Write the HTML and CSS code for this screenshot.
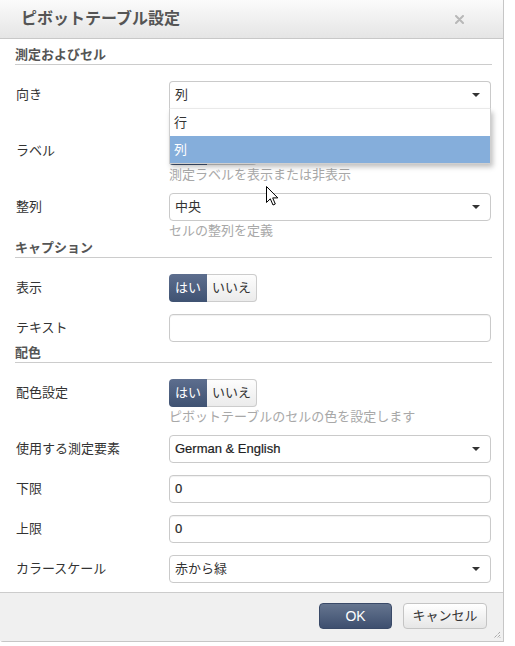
FILE: index.html
```html
<!DOCTYPE html>
<html lang="ja">
<head>
<meta charset="utf-8">
<title>ピボットテーブル設定</title>
<link rel="stylesheet" href="styles.css">
</head>
<body>
<div class="page">
  <div class="dialog">
    <div class="dlg-header">
      <h1 class="dlg-title">ピボットテーブル設定</h1>
      <svg class="close" width="9" height="9" viewBox="0 0 9 9"><path d="M1 1L8 8M8 1L1 8" stroke="#b8b8b8" stroke-width="2" stroke-linecap="round"/></svg>
    </div>
    <div class="dlg-body">
      <section class="group">
        <h2 class="group-title">測定およびセル</h2>
        <div class="row">
          <div class="lbl">向き</div>
          <div class="ctl">
            <div class="field select open">列<i class="caret"></i>
              <ul class="menu">
                <li>行</li>
                <li class="active">列</li>
              </ul>
            </div>
            <div class="help"></div>
          </div>
        </div>
        <div class="row">
          <div class="lbl">ラベル</div>
          <div class="ctl">
            <div class="toggle covered"><span class="tg-on"><span class="txt">はい</span></span><span class="tg-off"><span class="txt">いいえ</span></span></div>
            <div class="help">測定ラベルを表示または非表示</div>
          </div>
        </div>
        <div class="row">
          <div class="lbl">整列</div>
          <div class="ctl">
            <div class="field select">中央<i class="caret"></i></div>
            <div class="help">セルの整列を定義</div>
          </div>
        </div>
      </section>
      <section class="group">
        <h2 class="group-title">キャプション</h2>
        <div class="row">
          <div class="lbl">表示</div>
          <div class="ctl">
            <div class="toggle"><span class="tg-on">はい</span><span class="tg-off">いいえ</span></div>
          </div>
        </div>
        <div class="row">
          <div class="lbl">テキスト</div>
          <div class="ctl">
            <div class="field input"></div>
          </div>
        </div>
      </section>
      <section class="group">
        <h2 class="group-title">配色</h2>
        <div class="row">
          <div class="lbl">配色設定</div>
          <div class="ctl">
            <div class="toggle"><span class="tg-on">はい</span><span class="tg-off">いいえ</span></div>
            <div class="help">ピボットテーブルのセルの色を設定します</div>
          </div>
        </div>
        <div class="row">
          <div class="lbl">使用する測定要素</div>
          <div class="ctl">
            <div class="field select latin">German &amp; English<i class="caret"></i></div>
          </div>
        </div>
        <div class="row">
          <div class="lbl">下限</div>
          <div class="ctl">
            <div class="field input latin">0</div>
          </div>
        </div>
        <div class="row">
          <div class="lbl">上限</div>
          <div class="ctl">
            <div class="field input latin">0</div>
          </div>
        </div>
        <div class="row">
          <div class="lbl">カラースケール</div>
          <div class="ctl">
            <div class="field select">赤から緑<i class="caret"></i></div>
          </div>
        </div>
      </section>
    </div>
    <div class="dlg-footer">
      <button class="btn btn-primary">OK</button>
      <button class="btn btn-default">キャンセル</button>
    </div>
    <svg class="grip" width="8" height="8" viewBox="0 0 8 8"><path d="M7 1L1 7M7 4L4 7M7 6.5L6.5 7" stroke="#888" stroke-width="1" stroke-dasharray="1 1"/></svg>
  </div>
  <svg class="cursor" width="13" height="20" viewBox="0 0 13 20"><path d="M0.5 0.5L0.5 16.5L4.3 12.8L7 19L9.3 18L6.7 11.9L11.8 11.9Z" fill="#fff" stroke="#000" stroke-width="1" stroke-linejoin="round"/></svg>
</div>
</body>
</html>
```

FILE: styles.css
```css
body {
  margin: 0;
  background: #fff;
  font-family: "Liberation Sans", "Noto Sans CJK JP", sans-serif;
  font-size: 13px;
  color: #333;
}

.page {
  position: relative;
  width: 515px;
  height: 646px;
  overflow: hidden;
}

.dialog {
  position: relative;
  width: 503px;
  background: #fff;
  border-right: 1px solid #c6c6c6;
  border-bottom: 1px solid #c6c6c6;
  border-bottom-left-radius: 3px;
}

.dlg-header {
  height: 38px;
  border-bottom: 1px solid #c8c8c8;
  background: linear-gradient(#fbfbfb, #e5e5e5);
  display: flex;
  align-items: center;
  justify-content: space-between;
  padding: 0 39px 0 21px;
}

.dlg-title {
  margin: 0;
  font-size: 16px;
  font-weight: bold;
  color: #555;
  line-height: 20px;
}

.close {
  display: block;
}

.dlg-body {
  padding: 5px 11px 9px 15px;
}

.group-title {
  margin: 2px 0 16px;
  font-size: 13px;
  font-weight: bold;
  color: #555;
  line-height: 18px;
  border-bottom: 1px solid #cccccc;
}

.row {
  display: grid;
  grid-template-columns: 153px 1fr;
  padding: 0 1px;
  margin-bottom: 12px;
}

.row:last-child {
  margin-bottom: 0;
}

.lbl {
  line-height: 28px;
  color: #333;
}

.ctl {
  min-width: 0;
}

.field {
  position: relative;
  box-sizing: border-box;
  height: 28px;
  border: 1px solid #cacaca;
  border-radius: 4px;
  background: #fff;
  padding: 0 6px 0 5px;
  line-height: 26px;
  color: #333;
}

.latin {
  color: #222;
  -webkit-text-stroke: 0.2px #222;
}

.input {
  box-shadow: inset 0 1px 1px rgba(0, 0, 0, 0.06);
}

.caret {
  position: absolute;
  right: 10px;
  top: 11px;
  width: 0;
  height: 0;
  border-left: 4px solid transparent;
  border-right: 4px solid transparent;
  border-top: 4px solid #333;
}

.select.open {
  border-bottom-color: #eeeeee;
  border-bottom-left-radius: 0;
  border-bottom-right-radius: 0;
}

.menu {
  position: absolute;
  top: 27px;
  left: -1px;
  right: -1px;
  margin: 0;
  padding: 0;
  list-style: none;
  background: #fff;
  border: 1px solid #cfcfcf;
  border-top: none;
  box-shadow: 2px 3px 5px rgba(0, 0, 0, 0.25);
  z-index: 5;
}

.menu li {
  height: 27px;
  line-height: 27px;
  padding-left: 4px;
  color: #333;
}

.menu li.active {
  background: #85aedb;
  color: #fff;
}

.help {
  margin-top: 4px;
  height: 12px;
  line-height: 12px;
  color: #a8a8a8;
  white-space: nowrap;
}

.toggle {
  display: flex;
  width: 88px;
  height: 28px;
}

.toggle.covered .txt {
  visibility: hidden;
}

.tg-on {
  width: 38px;
  border-radius: 4px 0 0 4px;
  background: linear-gradient(#5d6e8e, #3f5272);
  color: #fff;
  text-align: center;
  line-height: 28px;
}

.tg-off {
  box-sizing: border-box;
  width: 50px;
  border: 1px solid #cccccc;
  border-left: none;
  border-radius: 0 4px 4px 0;
  background: linear-gradient(#fdfdfd, #ebebeb);
  color: #333;
  text-align: center;
  line-height: 26px;
}

.dlg-footer {
  border-top: 1px solid #cccccc;
  background: #f0f0f0;
  padding: 10px 16px 12px;
  display: flex;
  justify-content: flex-end;
  gap: 11px;
}

.btn {
  box-sizing: border-box;
  height: 26px;
  border-radius: 4px;
  font-family: "Liberation Sans", "Noto Sans CJK JP", sans-serif;
  font-size: 13px;
  line-height: 24px;
  padding: 0;
  margin: 0;
}

.btn-primary {
  width: 73px;
  background: linear-gradient(#65758f, #3e4f6f);
  border: 1px solid #3a4a68;
  color: #fff;
  font-size: 14px;
}

.btn-default {
  width: 84px;
  background: linear-gradient(#ffffff, #e6e6e6);
  border: 1px solid #c4c4c4;
  color: #333;
}

.grip {
  position: absolute;
  right: 2px;
  bottom: 2px;
}

.cursor {
  position: absolute;
  left: 266px;
  top: 186px;
}
```
